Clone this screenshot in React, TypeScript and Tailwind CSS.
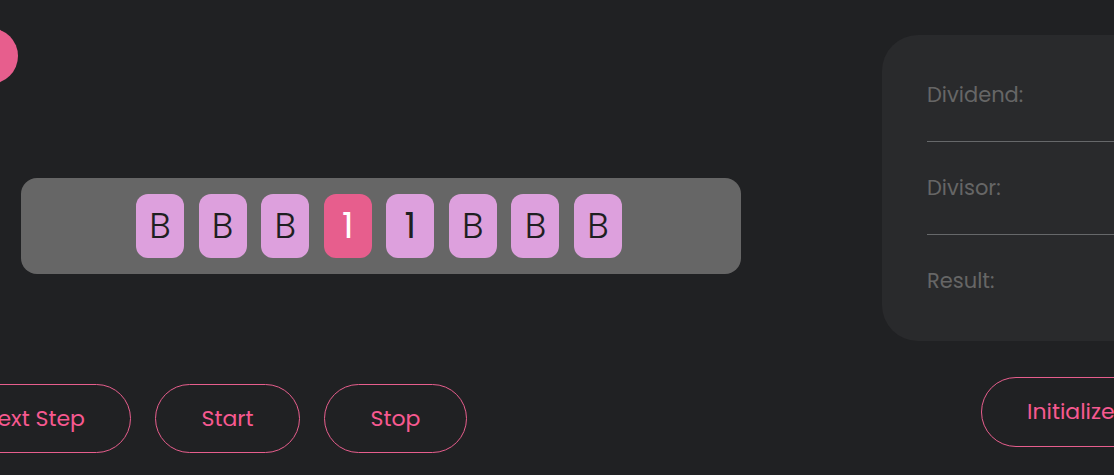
const cells = ["B", "B", "B", "1", "1", "B", "B", "B"];
const head = 3;

const cell = "flex h-16 w-12 items-center justify-center rounded-xl text-[36px]";

function cellColors(symbol: string, isHead: boolean) {
  if (isHead) return "bg-[#e75e8d] text-white";
  return symbol === "B"
    ? "bg-[#dda0dd] font-light text-[#1e1f21]"
    : "bg-[#dda0dd] text-[#1e1f21]";
}

const pill =
  "box-border flex shrink-0 items-center justify-center whitespace-nowrap rounded-full border border-[#e75e8d] text-[22px] leading-8 text-[#f75990]";

function Tape() {
  return (
    <section className="mt-[94px] ml-[21px] flex rounded-2xl bg-[#666666] py-4 pl-[115px]">
      <ol className="flex w-[486px] justify-between">
        {cells.map((symbol, i) => (
          <li key={i} className={`${cell} ${cellColors(symbol, i === head)}`}>
            {symbol}
          </li>
        ))}
      </ol>
    </section>
  );
}

function Registers() {
  return (
    <section className="rounded-l-[36px] bg-[#292a2c] py-[14px] pl-[45px] text-[21px] leading-8 text-[#666666]">
      <p className="flex h-[93px] items-center border-b border-[#66686a]">Dividend:</p>
      <p className="flex h-[93px] items-center border-b border-[#66686a]">Divisor:</p>
      <p className="flex h-[92px] items-center">Result:</p>
    </section>
  );
}

export default function App() {
  return (
    <main
      className="flex min-h-screen items-start overflow-hidden bg-[#202123]"
      style={{ fontFamily: 'Poppins, Inter, "Liberation Sans", sans-serif' }}
    >
      <div className="w-[741px] shrink-0 pt-7">
        <div className="-ml-[38px] size-14 rounded-full bg-[#e75e8d]" aria-hidden="true" />
        <Tape />
        <div className="mt-[110px] -ml-16 flex gap-6">
          <button type="button" className={pill + " h-[69px] w-[195px]"}>Next Step</button>
          <button type="button" className={pill + " h-[69px] w-[145px]"}>Start</button>
          <button type="button" className={pill + " h-[69px] w-[143px]"}>Stop</button>
        </div>
      </div>
      <div className="ml-[141px] min-w-0 grow pt-[35px]">
        <Registers />
        <div className="mt-9 ml-[99px] flex">
          <button type="button" className={pill + " h-[70px] px-[45px]"}>Initialize</button>
        </div>
      </div>
    </main>
  );
}
